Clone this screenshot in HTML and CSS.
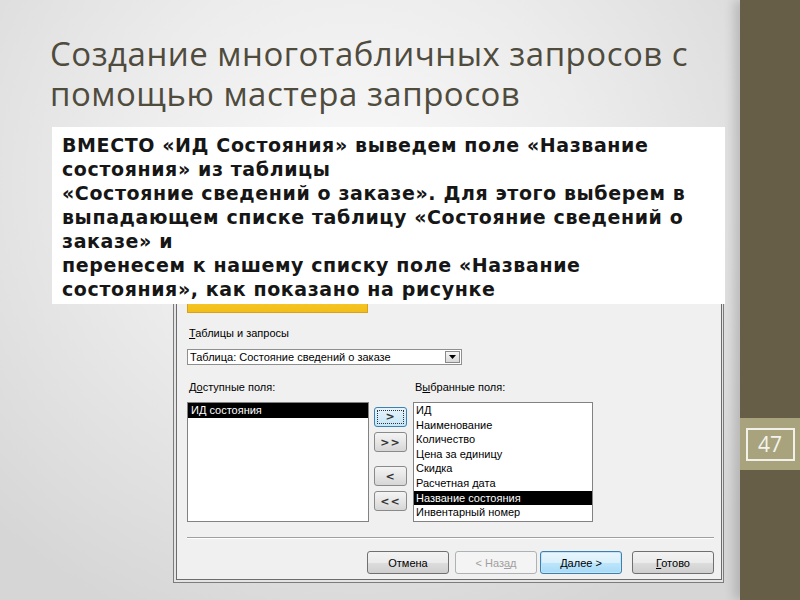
FILE: index.html
```html
<!DOCTYPE html>
<html lang="ru">
<head>
  <meta charset="UTF-8" />
  <meta name="viewport" content="width=device-width, initial-scale=1.0"/>
  <title>Создание многотабличных запросов</title>
  <link rel="stylesheet" href="styles.css">
</head>
<body>
  <div class="screen">
    <main class="slide">
      <h1 class="title">Создание многотабличных запросов с<br>помощью мастера запросов</h1>

      <div class="note">ВМЕСТО «ИД Состояния» выведем поле «Название<br>состояния» из таблицы<br>«Состояние сведений о заказе». Для этого выберем в<br>выпадающем списке таблицу «Состояние сведений о<br>заказе» и<br>перенесем к нашему списку поле «Название<br>состояния», как показано на рисунке</div>

      <div class="wizard">
        <div class="wizard-body">
          <div class="banner"></div>
          <div class="label"><u>Т</u>аблицы и запросы</div>
          <div class="combo">
            <span class="combo-text">Таблица: Состояние сведений о заказе</span>
            <span class="combo-btn">
              <svg width="7" height="4" viewBox="0 0 7 4"><path d="M0 0h7L3.5 4z" fill="#000"/></svg>
            </span>
          </div>

          <div class="fields-head">
            <span>Д<u>о</u>ступные поля:</span>
            <span>В<u>ы</u>бранные поля:</span>
          </div>

          <div class="fields">
            <ul class="list available">
              <li class="selected">ИД состояния</li>
            </ul>
            <div class="movers">
              <button class="mover focused"><span>&gt;</span></button>
              <button class="mover">&gt;&gt;</button>
              <button class="mover gap">&lt;</button>
              <button class="mover">&lt;&lt;</button>
            </div>
            <ul class="list chosen">
              <li>ИД</li>
              <li>Наименование</li>
              <li>Количество</li>
              <li>Цена за единицу</li>
              <li>Скидка</li>
              <li>Расчетная дата</li>
              <li class="selected">Название состояния</li>
              <li>Инвентарный номер</li>
            </ul>
          </div>

          <div class="separator"></div>

          <div class="actions">
            <button class="btn">Отмена</button>
            <button class="btn disabled">&lt; Наз<u>а</u>д</button>
            <button class="btn default"><u>Д</u>алее &gt;</button>
            <button class="btn last"><u>Г</u>отово</button>
          </div>
        </div>
      </div>
    </main>

    <aside class="sidebar">
      <div class="page-band">
        <span class="page-num">47</span>
      </div>
    </aside>
  </div>
</body>
</html>
```

FILE: styles.css
```css
html, body {
  margin: 0;
  padding: 0;
}
body {
  width: 800px;
  height: 600px;
  overflow: hidden;
  background: #dcdcdc;
}
.screen {
  display: flex;
  width: 800px;
  height: 600px;
}

/* slide area */
.slide {
  width: 740px;
  height: 600px;
  background: radial-gradient(ellipse 70% 80% at 48% 30%, #f9f9f9 0%, #ececec 45%, #d6d6d6 100%);
}
.title {
  margin: 34px 0 0 50px;
  font-family: "Open Sans", "DejaVu Sans", sans-serif;
  font-weight: 400;
  font-size: 33px;
  line-height: 40px;
  letter-spacing: 0.5px;
  color: #4f4b3d;
}
.note {
  position: relative;
  z-index: 2;
  margin: 13px 0 0 52px;
  width: 673px;
  height: 177px;
  box-sizing: border-box;
  padding: 6px 0 0 10px;
  background: #fff;
  font-family: "DejaVu Sans", sans-serif;
  font-weight: bold;
  font-size: 19px;
  line-height: 24px;
  letter-spacing: 0.6px;
  color: #161616;
  white-space: nowrap;
}

/* access wizard dialog */
.wizard {
  margin: -20px 0 0 173px;
  width: 551px;
  box-sizing: border-box;
  border: 1px solid #7c7c7c;
  padding: 2px 1px 2px 2px;
  background: #e4e4e4;
  font-family: "Liberation Sans", Arial, sans-serif;
  font-size: 11px;
  color: #000;
}
.wizard-body {
  border: 1px solid #6c6c6c;
  background: #f0f0f0;
  padding: 4px 7px 5px 10px;
}
.banner {
  width: 181px;
  height: 21px;
  box-sizing: border-box;
  border: 1px solid #d9a21a;
  background: linear-gradient(#fbe07a, #f6c82a 40%, #f3bd16);
}
.label {
  margin-top: 13px;
  padding-left: 2px;
  line-height: 14px;
}
.combo {
  margin-top: 9px;
  width: 275px;
  height: 16px;
  box-sizing: border-box;
  border: 1px solid #8e8f8f;
  background: #fff;
  display: flex;
  align-items: center;
  justify-content: space-between;
  padding-left: 2px;
}
.combo-text {
  line-height: 14px;
}
.combo-btn {
  width: 15px;
  height: 12px;
  box-sizing: border-box;
  margin-right: 1px;
  border: 1px solid #8a8a8a;
  background: linear-gradient(#f6f6f6, #d8d8d8);
  display: flex;
  align-items: center;
  justify-content: center;
}
.fields-head {
  margin-top: 15px;
  display: grid;
  grid-template-columns: 226px auto;
  padding-left: 2px;
  line-height: 14px;
}
.fields {
  margin-top: 8px;
  display: flex;
  align-items: flex-start;
}
.list {
  margin: 0;
  padding: 0;
  list-style: none;
  height: 120px;
  box-sizing: border-box;
  border: 1px solid #828282;
  background: #fff;
}
.list li {
  height: 14.6px;
  line-height: 14.6px;
  padding-left: 3px;
  white-space: nowrap;
}
.list li.selected {
  background: #000;
  color: #fff;
}
.available {
  width: 182px;
}
.chosen {
  width: 180px;
  margin-left: 6px;
}
.chosen li {
  padding-left: 2px;
}
.movers {
  width: 33px;
  margin-left: 5px;
  padding-top: 5px;
  display: flex;
  flex-direction: column;
  gap: 5px;
}
.mover {
  height: 20px;
  padding: 0;
  border: 1px solid #8a8a8a;
  border-radius: 3px;
  background: linear-gradient(#f4f4f4, #e6e6e6 50%, #d6d6d6);
  font-family: "DejaVu Sans", sans-serif;
  font-weight: bold;
  font-size: 11px;
  color: #333;
  letter-spacing: 1px;
}
.mover.gap {
  margin-top: 9px;
}
.mover.focused {
  border-color: #3c7fb1;
  background: linear-gradient(#e6f4fc, #c6e6f8);
  padding: 2px;
}
.mover.focused span {
  display: block;
  height: 100%;
  border: 1px dotted #333;
  box-sizing: border-box;
  line-height: 12px;
}
.separator {
  margin-top: 15px;
  border-top: 1px solid #a0a0a0;
  border-bottom: 1px solid #fff;
}
.actions {
  margin-top: 12px;
  display: flex;
  justify-content: flex-end;
  gap: 6px;
}
.btn {
  width: 82px;
  height: 23px;
  padding: 0;
  border: 1px solid #707070;
  border-radius: 3px;
  background: linear-gradient(#f3f3f3, #ebebeb 50%, #dddddd 51%, #cfcfcf);
  font-family: "Liberation Sans", Arial, sans-serif;
  font-size: 11px;
  color: #000;
}
.btn.disabled {
  border-color: #adb2b5;
  background: #f4f4f4;
  color: #a0a0a0;
  margin-right: -3px;
}
.btn.default {
  border-color: #3c7fb1;
  background: linear-gradient(#eaf6fd, #d9f0fc 50%, #bee6fd 51%, #a7d9f5);
  box-shadow: inset 0 0 0 1px #c4e5f6;
  margin-right: 4px;
}

/* right sidebar */
.sidebar {
  width: 60px;
  height: 600px;
  background: #665e47;
  box-shadow: -6px 0 10px rgba(0, 0, 0, 0.16);
  padding-top: 418px;
  box-sizing: border-box;
}
.page-band {
  height: 52px;
  background: #a8a37d;
  display: flex;
  align-items: center;
  justify-content: center;
}
.page-num {
  width: 49px;
  height: 33px;
  box-sizing: border-box;
  border: 2px solid #f1f1ea;
  display: flex;
  align-items: center;
  justify-content: center;
  font-family: "Open Sans", sans-serif;
  font-size: 21px;
  color: #f4f4ee;
}
```
